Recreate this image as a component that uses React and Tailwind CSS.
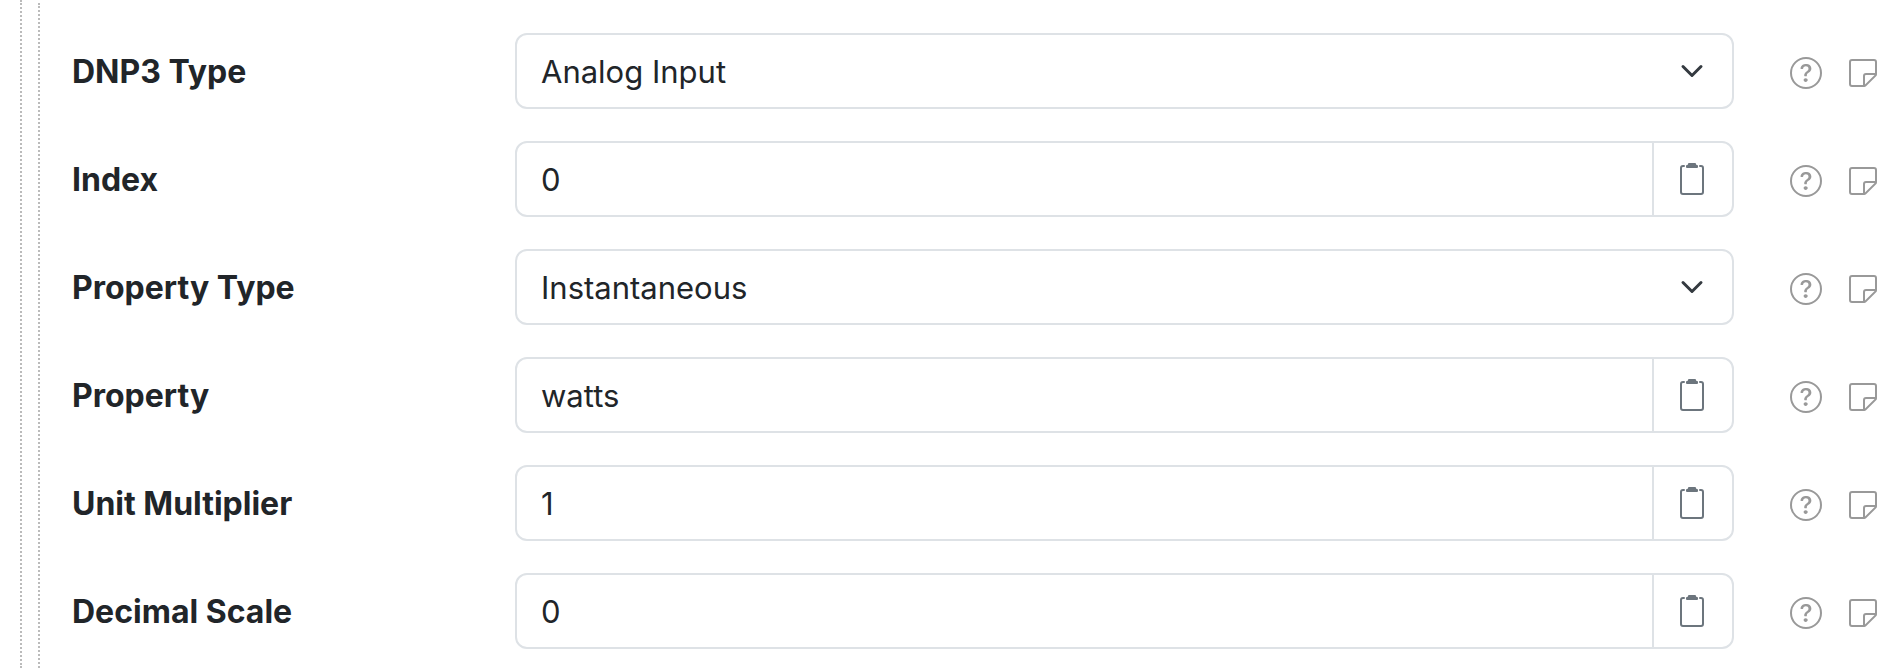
import { useId } from "react";
import { BsClipboard2, BsQuestionCircle, BsSticky } from "react-icons/bs";

const fields = [
  { label: "DNP3 Type", value: "Analog Input", options: ["Analog Input"] },
  { label: "Index", value: "0" },
  { label: "Property Type", value: "Instantaneous", options: ["Instantaneous"] },
  { label: "Property", value: "watts" },
  { label: "Unit Multiplier", value: "1" },
  { label: "Decimal Scale", value: "0" },
];

function SelectField({ id, value, options }) {
  return (
    <div className="grid items-center">
      <select
        id={id}
        defaultValue={value}
        className="col-start-1 row-start-1 h-19 w-full appearance-none rounded-xl border-2 border-[#dee2e6] bg-white pt-0.5 pr-18 pl-6"
      >
        {options.map((option) => (
          <option key={option}>{option}</option>
        ))}
      </select>
      <svg
        viewBox="0 0 16 16"
        className="pointer-events-none col-start-1 row-start-1 mr-[30px] size-6 justify-self-end"
        fill="none"
        stroke="#343a40"
        strokeWidth="2"
        strokeLinecap="round"
        strokeLinejoin="round"
        aria-hidden="true"
      >
        <path d="m2 5 6 6 6-6" />
      </svg>
    </div>
  );
}

function TextField({ id, value }) {
  return (
    <div className="flex h-19 overflow-hidden rounded-xl border-2 border-[#dee2e6] bg-white">
      <input id={id} type="text" defaultValue={value} className="min-w-0 flex-1 bg-transparent px-6 pt-0.5" />
      <button
        type="button"
        aria-label="Copy"
        className="flex w-20 shrink-0 items-center justify-center border-l-2 border-[#dee2e6] pr-0.5 text-[#6c757d]"
      >
        <BsClipboard2 className="size-8" />
      </button>
    </div>
  );
}

function FieldRow({ label, value, options }) {
  const id = useId();
  return (
    <div className="grid grid-cols-[443px_minmax(0,1fr)_auto] items-center">
      <label htmlFor={id} className="pt-0.5 text-[32px] font-bold">
        {label}
      </label>
      {options ? <SelectField id={id} value={value} options={options} /> : <TextField id={id} value={value} />}
      <div className="ml-14 flex gap-[25px] pt-1 text-[#999]">
        <button type="button" aria-label="Help">
          <BsQuestionCircle className="size-8" />
        </button>
        <button type="button" aria-label="Note">
          <BsSticky className="size-8" />
        </button>
      </div>
    </div>
  );
}

export default function App() {
  return (
    <main className="flex min-h-screen bg-white pl-5 font-['Inter',sans-serif] text-[31px] leading-12 text-[#212529]">
      <div className="flex flex-1 border-l-2 border-dotted border-[#bbb] pt-[3px] pl-4">
        <form className="flex flex-1 flex-col gap-8 border-l-2 border-dotted border-[#bbb] pt-[30px] pr-[25px] pl-8">
          {fields.map((field) => (
            <FieldRow key={field.label} {...field} />
          ))}
        </form>
      </div>
    </main>
  );
}
